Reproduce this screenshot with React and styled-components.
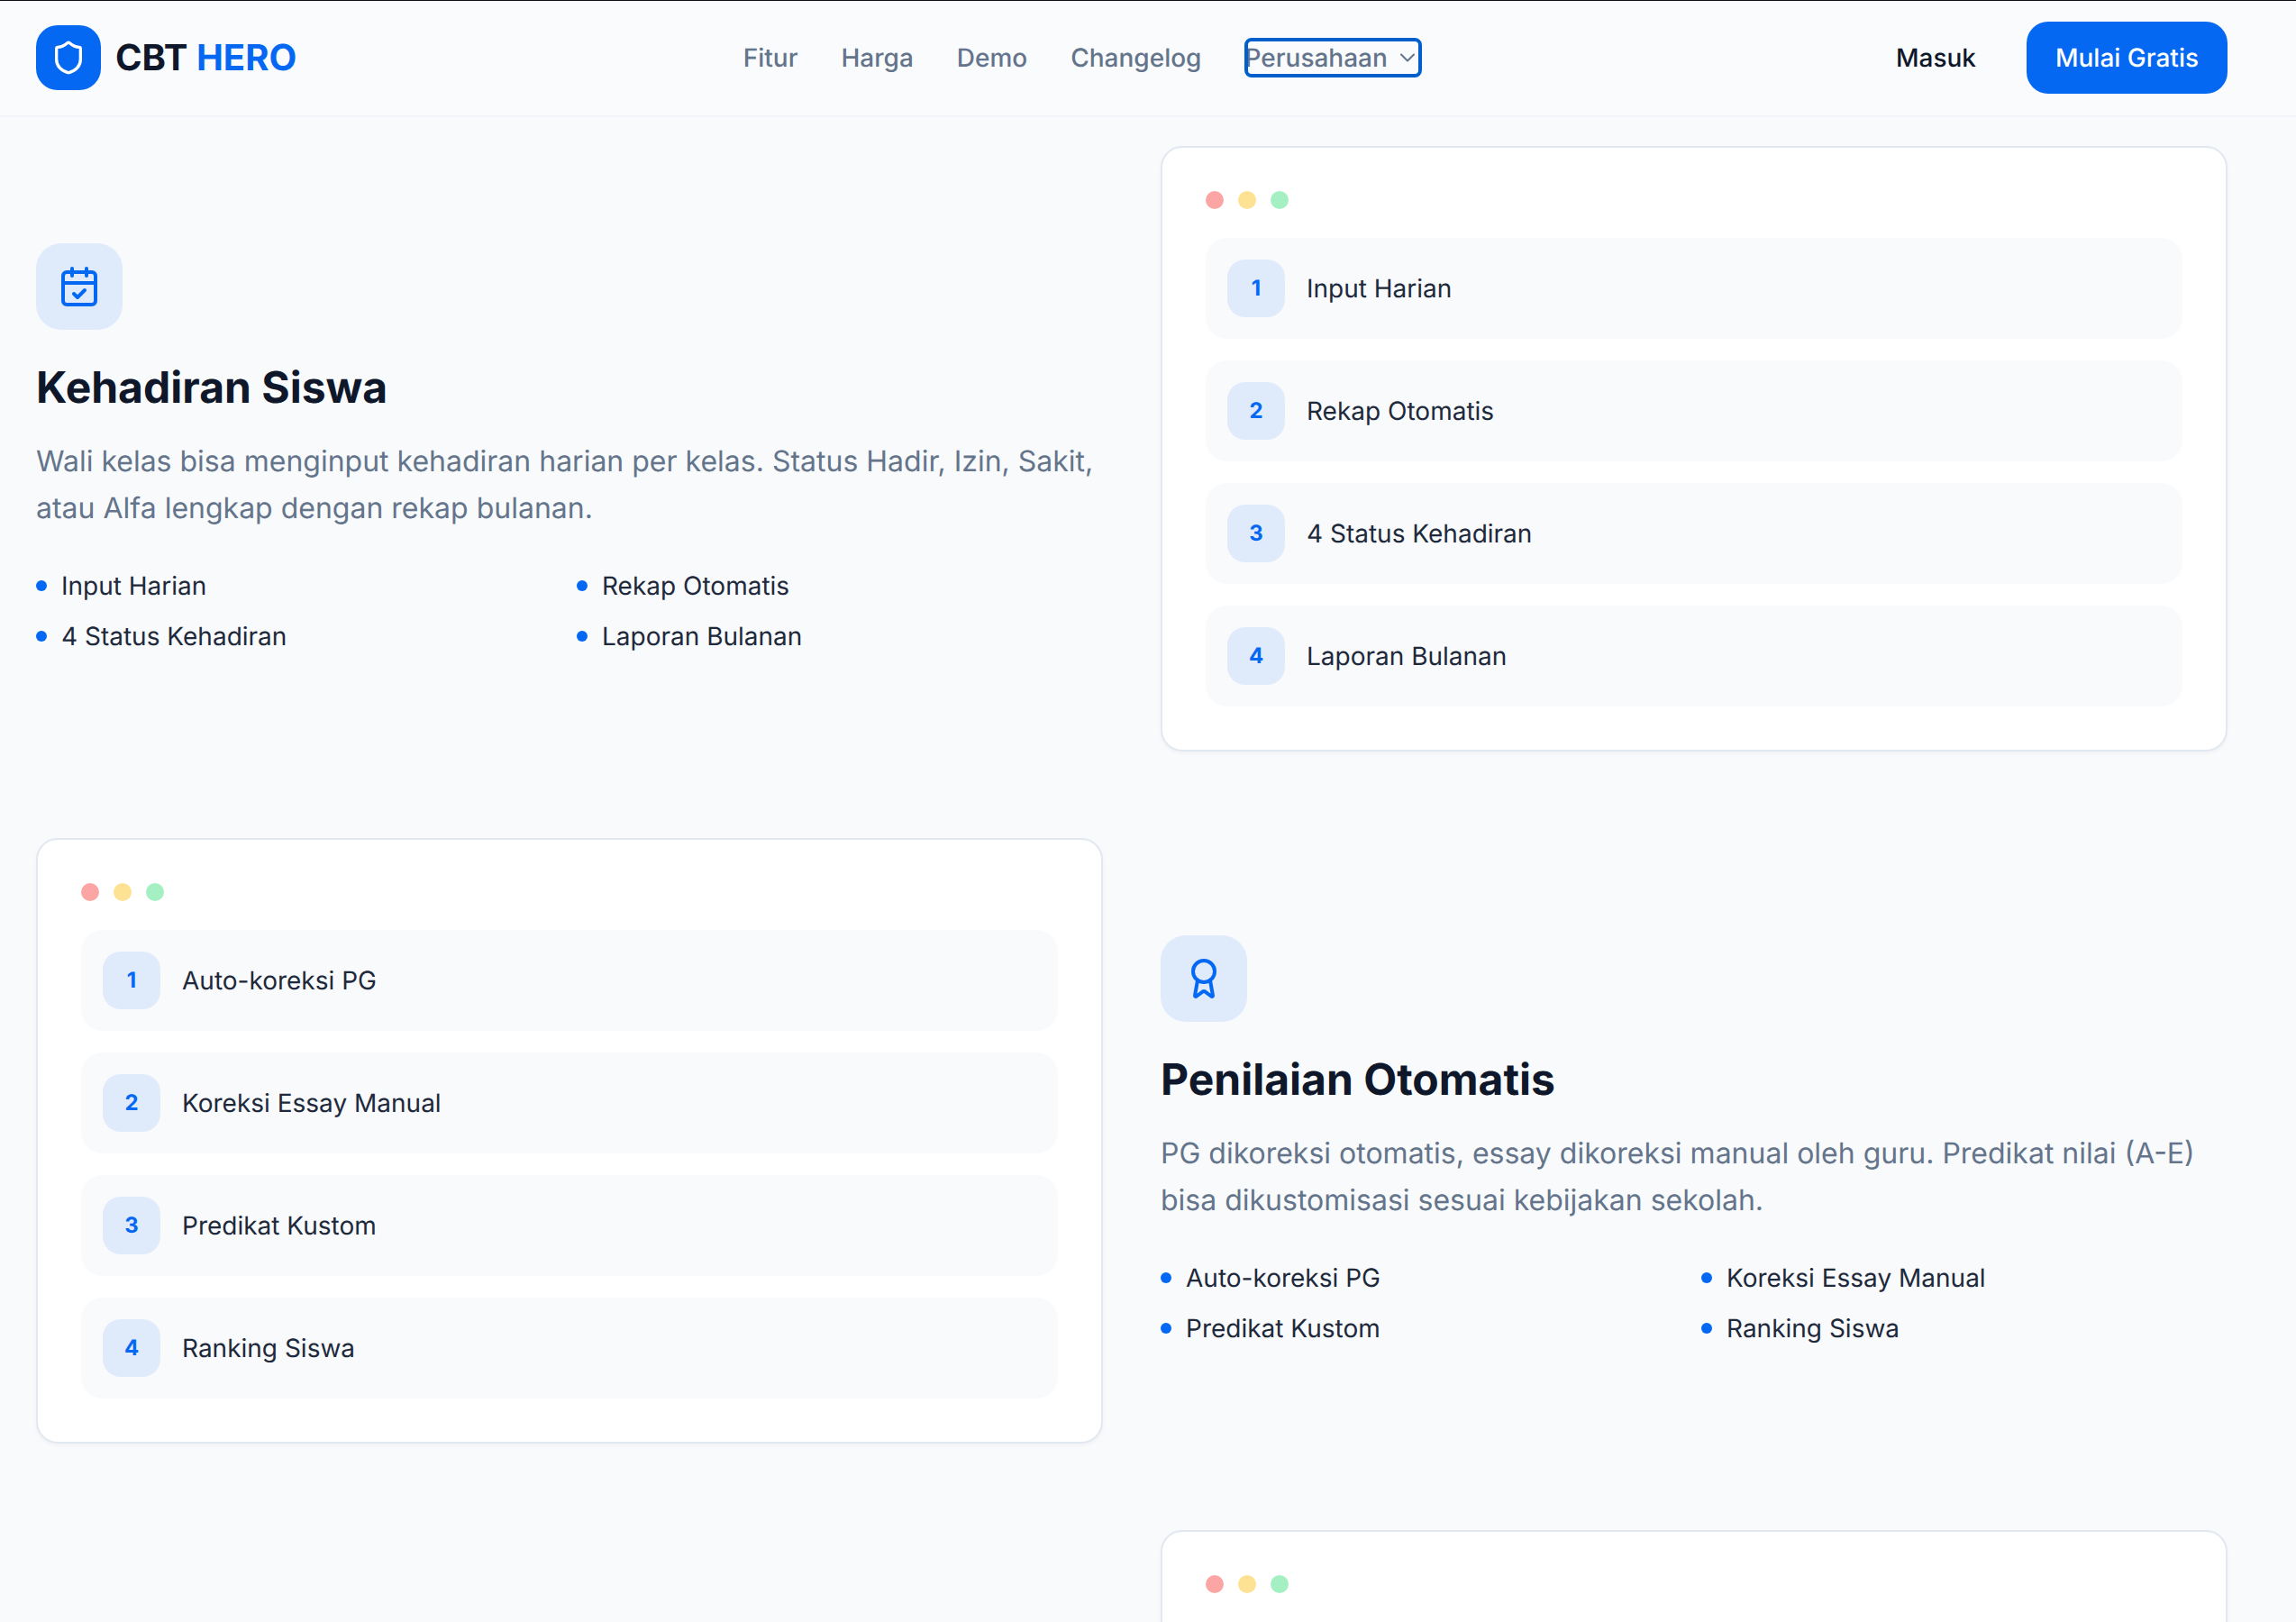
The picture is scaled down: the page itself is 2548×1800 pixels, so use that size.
import React from "react";
import styled, { createGlobalStyle } from "styled-components";
import { Shield, CalendarCheck, Award, ChevronDown } from "lucide-react";

const Global = createGlobalStyle`
  * { box-sizing: border-box; }
  html, body { margin: 0; padding: 0; height: 1800px; overflow: hidden; background: #f8fafc; }
  body {
    font-family: Inter, "Liberation Sans", sans-serif;
    color: #0f172a;
    text-rendering: geometricPrecision;
    -webkit-font-smoothing: antialiased;
  }
`;

const Page = styled.div`
  width: 2548px;
  height: 1800px;
  overflow: hidden;
  background: #f8fafc;
`;

const Header = styled.header`
  height: 130px;
  display: flex;
  align-items: center;
  justify-content: space-between;
  padding: 0 76px 0 40px;
  background: #f9fbfd;
  border-bottom: 2px solid #f1f5f9;
  box-shadow: inset 0 1px 0 #0b0f17;
`;

const Brand = styled.div`
  display: flex;
  align-items: center;
  gap: 16px;
`;

const LogoMark = styled.div`
  width: 72px;
  height: 72px;
  border-radius: 24px;
  background: #0468f3;
  color: #fff;
  display: flex;
  align-items: center;
  justify-content: center;
`;

const BrandName = styled.div`
  font-size: 40px;
  line-height: 56px;
  font-weight: 700;
  color: #0f172a;
  span { color: #0468f3; }
`;

const Nav = styled.nav`
  display: flex;
  align-items: center;
  gap: 48px;
`;

const NavLink = styled.a`
  font-size: 28px;
  line-height: 40px;
  font-weight: 500;
  color: #64748b;
`;

const NavSelect = styled.div`
  display: flex;
  align-items: center;
  justify-content: space-between;
  width: 197px;
  height: 44px;
  font-size: 28px;
  font-weight: 500;
  color: #64748b;
  border-radius: 8px;
  outline: 4px solid #005fcc;
  outline-offset: -4px;
  svg { margin-right: 2px; }
`;

const Actions = styled.div`
  display: flex;
  align-items: center;
  gap: 24px;
`;

const Ghost = styled.a`
  padding: 0 32px 0 30px;
  font-size: 28px;
  line-height: 40px;
  font-weight: 500;
  color: #0f172a;
`;

const Primary = styled.a`
  height: 80px;
  width: 223px;
  display: flex;
  align-items: center;
  justify-content: center;
  border-radius: 24px;
  background: #0468f3;
  color: #fff;
  font-size: 28px;
  font-weight: 500;
`;

const Main = styled.main`
  padding: 32px 76px 0 40px;
  display: flex;
  flex-direction: column;
  gap: 96px;
`;

const Section = styled.section`
  display: grid;
  grid-template-columns: 1184px 1184px;
  gap: 64px;
  align-items: center;
`;

const IconBox = styled.div`
  width: 96px;
  height: 96px;
  border-radius: 28px;
  background: #dfeafb;
  color: #0468f3;
  display: flex;
  align-items: center;
  justify-content: center;
  margin-bottom: 32px;
`;

const Title = styled.h2`
  margin: 0 0 24px;
  font-size: 48px;
  line-height: 64px;
  font-weight: 700;
  color: #0f172a;
`;

const Lead = styled.p`
  margin: 0 0 40px;
  font-size: 32px;
  line-height: 52px;
  color: #64748b;
`;

const Features = styled.ul`
  list-style: none;
  margin: 0;
  padding: 0;
  display: grid;
  grid-template-columns: 1fr 1fr;
  gap: 16px;
`;

const Feature = styled.li`
  display: flex;
  align-items: center;
  gap: 16px;
  font-size: 28px;
  line-height: 40px;
  font-weight: 400;
  color: #1e293b;
  &::before {
    content: "";
    width: 12px;
    height: 12px;
    border-radius: 50%;
    background: #0468f3;
  }
`;

const Card = styled.div`
  min-height: 672px;
  background: #fff;
  border: 2px solid #e2e8f0;
  border-radius: 24px;
  padding: 48px;
  box-shadow: 0 2px 4px rgba(15, 23, 42, 0.04);
`;

const Dots = styled.div`
  display: flex;
  gap: 16px;
  margin-bottom: 32px;
`;

const Dot = styled.span`
  width: 20px;
  height: 20px;
  border-radius: 50%;
  background: ${(p) => p.$color};
`;

const Steps = styled.div`
  display: flex;
  flex-direction: column;
  gap: 24px;
`;

const Step = styled.div`
  height: 112px;
  padding: 24px;
  display: flex;
  align-items: center;
  gap: 24px;
  border-radius: 24px;
  background: #f8fafc;
  font-size: 28px;
  line-height: 40px;
  font-weight: 400;
  color: #1e293b;
`;

const StepNo = styled.span`
  width: 64px;
  height: 64px;
  border-radius: 20px;
  background: #dfeafb;
  color: #0468f3;
  font-size: 24px;
  font-weight: 700;
  display: flex;
  align-items: center;
  justify-content: center;
`;

const WindowDots = () => (
  <Dots>
    <Dot $color="#fca5a5" />
    <Dot $color="#fde293" />
    <Dot $color="#a5f0c3" />
  </Dots>
);

const StepCard = ({ items }) => (
  <Card>
    <WindowDots />
    <Steps>
      {items.map((t, i) => (
        <Step key={t}>
          <StepNo>{i + 1}</StepNo>
          {t}
        </Step>
      ))}
    </Steps>
  </Card>
);

const Info = ({ icon, title, text, items }) => (
  <div>
    <IconBox>{icon}</IconBox>
    <Title>{title}</Title>
    <Lead>{text}</Lead>
    <Features>
      {items.map((t) => (
        <Feature key={t}>{t}</Feature>
      ))}
    </Features>
  </div>
);

const attendance = ["Input Harian", "Rekap Otomatis", "4 Status Kehadiran", "Laporan Bulanan"];
const grading = ["Auto-koreksi PG", "Koreksi Essay Manual", "Predikat Kustom", "Ranking Siswa"];

export default function App() {
  return (
    <Page>
      <Global />
      <Header>
        <Brand>
          <LogoMark>
            <Shield size={40} strokeWidth={2} />
          </LogoMark>
          <BrandName>
            CBT <span>HERO</span>
          </BrandName>
        </Brand>
        <Nav>
          <NavLink>Fitur</NavLink>
          <NavLink>Harga</NavLink>
          <NavLink>Demo</NavLink>
          <NavLink>Changelog</NavLink>
          <NavSelect>
            Perusahaan
            <ChevronDown size={28} strokeWidth={1.75} />
          </NavSelect>
        </Nav>
        <Actions>
          <Ghost>Masuk</Ghost>
          <Primary>Mulai Gratis</Primary>
        </Actions>
      </Header>
      <Main>
        <Section>
          <Info
            icon={<CalendarCheck size={48} strokeWidth={2} />}
            title="Kehadiran Siswa"
            text="Wali kelas bisa menginput kehadiran harian per kelas. Status Hadir, Izin, Sakit, atau Alfa lengkap dengan rekap bulanan."
            items={attendance}
          />
          <StepCard items={attendance} />
        </Section>
        <Section>
          <StepCard items={grading} />
          <Info
            icon={<Award size={48} strokeWidth={2} />}
            title="Penilaian Otomatis"
            text="PG dikoreksi otomatis, essay dikoreksi manual oleh guru. Predikat nilai (A-E) bisa dikustomisasi sesuai kebijakan sekolah."
            items={grading}
          />
        </Section>
        <Section>
          <div />
          <Card>
            <WindowDots />
          </Card>
        </Section>
      </Main>
    </Page>
  );
}
